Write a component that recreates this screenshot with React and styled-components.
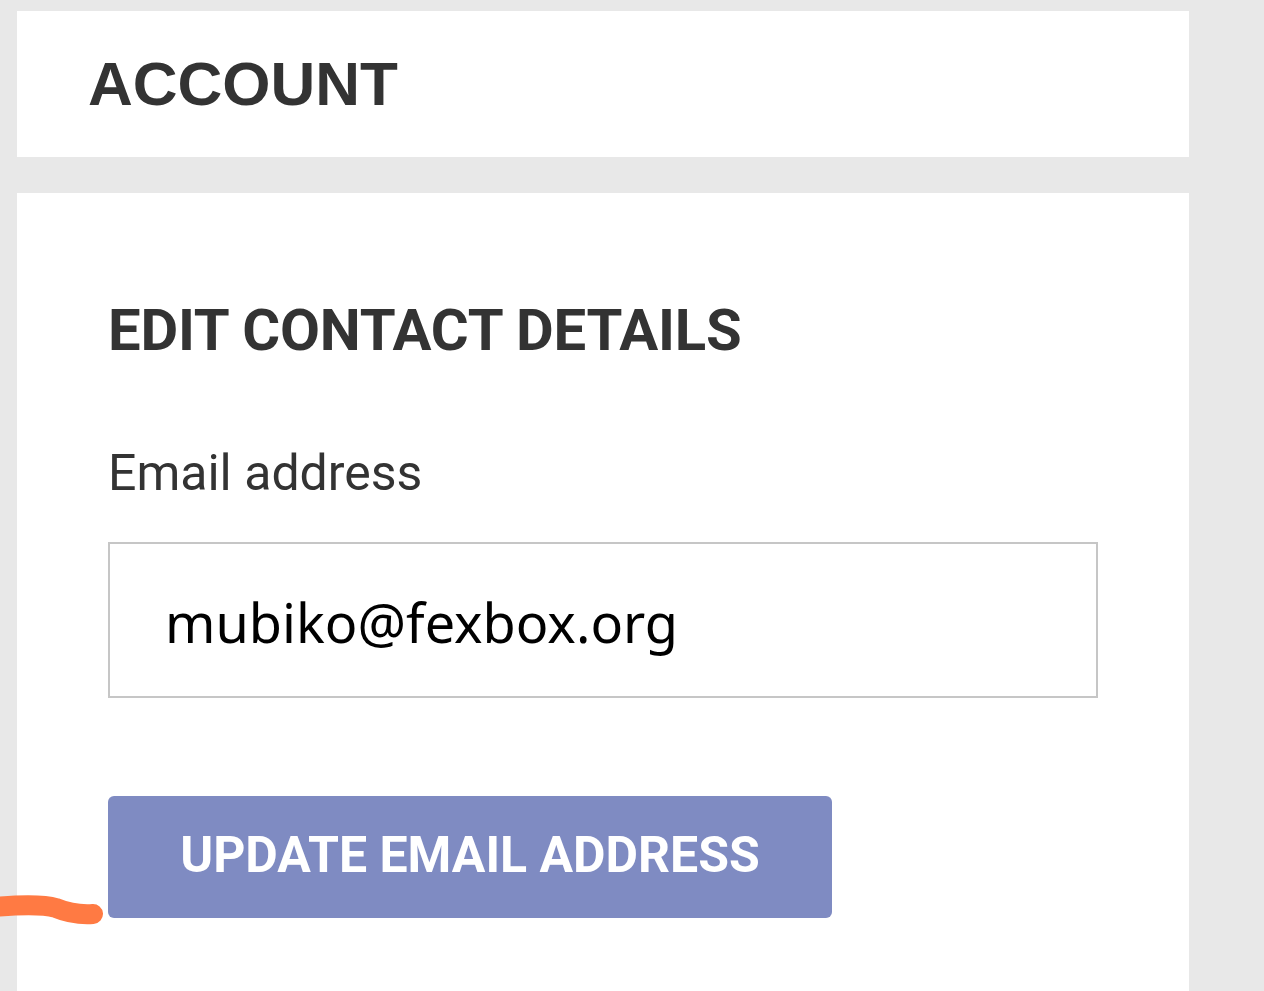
import React from "react";
import styled, { createGlobalStyle } from "styled-components";

const Global = createGlobalStyle`
  html, body {
    margin: 0;
    padding: 0;
    background: #e8e8e8;
  }
  body {
    font-family: Roboto, "Liberation Sans", Arial, sans-serif;
    color: #333333;
  }
`;

const Page = styled.div`
  position: relative;
  min-height: 991px;
  padding: 11px 0 0 17px;
  box-sizing: border-box;
  display: flex;
  flex-direction: column;
  gap: 36px;
  overflow: hidden;
`;

const Card = styled.section`
  width: 1172px;
  background: #ffffff;
  box-sizing: border-box;
`;

const HeaderCard = styled(Card)`
  height: 146px;
  display: flex;
  align-items: center;
  padding-left: 71px;
`;

const PageTitle = styled.h1`
  margin: 0;
  font-family: "Liberation Sans", Arial, sans-serif;
  font-weight: 700;
  font-size: 62px;
  line-height: 1;
  color: #333333;
`;

const FormCard = styled(Card)`
  flex: 1;
  padding: 104px 0 60px 91px;
  display: flex;
  flex-direction: column;
  align-items: flex-start;
`;

const SectionTitle = styled.h2`
  margin: 0;
  font-family: Roboto, sans-serif;
  font-weight: 700;
  font-size: 58px;
  line-height: 66px;
  letter-spacing: -0.2px;
  color: #333333;
`;

const Label = styled.label`
  margin-top: 82px;
  font-family: Roboto, sans-serif;
  font-weight: 400;
  font-size: 50px;
  line-height: 56px;
  color: #333333;
`;

const EmailInput = styled.input`
  margin-top: 41px;
  width: 990px;
  height: 156px;
  box-sizing: border-box;
  border: 2px solid #c6c6c6;
  border-radius: 0;
  padding: 4px 0 0 55px;
  font-family: "Noto Sans", "Open Sans", sans-serif;
  font-size: 54px;
  color: #000000;
  background: #ffffff;
  outline: none;
`;

const SubmitButton = styled.button`
  margin-top: 98px;
  width: 724px;
  height: 122px;
  border: none;
  border-radius: 6px;
  background: #7f8bc2;
  color: #ffffff;
  font-family: Roboto, sans-serif;
  font-weight: 700;
  font-size: 50px;
  letter-spacing: 0;
  padding: 0 0 4px 0;
  cursor: pointer;
`;

const Scribble = styled.svg`
  position: absolute;
  left: 0;
  top: 890px;
  width: 110px;
  height: 45px;
  pointer-events: none;
`;

export default function App() {
  return (
    <>
      <Global />
      <Page>
        <HeaderCard>
          <PageTitle>ACCOUNT</PageTitle>
        </HeaderCard>
        <FormCard>
          <SectionTitle>EDIT CONTACT DETAILS</SectionTitle>
          <Label htmlFor="email">Email address</Label>
          <EmailInput id="email" type="email" defaultValue="mubiko@fexbox.org" />
          <SubmitButton type="button">UPDATE EMAIL ADDRESS</SubmitButton>
        </FormCard>
        <Scribble viewBox="0 0 110 45">
          <path
            d="M-6 17 C 18 15, 42 14, 56 18 C 68 23, 78 25, 93 24"
            fill="none"
            stroke="#ff7a43"
            strokeWidth="20"
            strokeLinecap="round"
          />
        </Scribble>
      </Page>
    </>
  );
}
